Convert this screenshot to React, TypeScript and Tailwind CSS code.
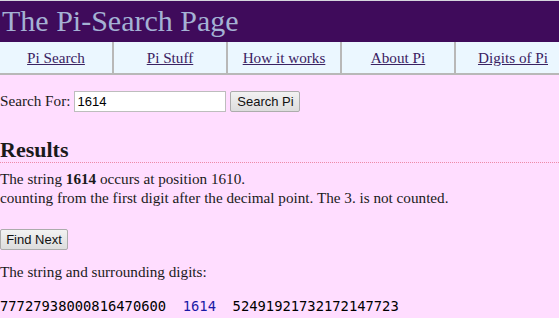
import React from "react";

const serif = { fontFamily: '"Liberation Serif", "Times New Roman", serif' };

export default function App() {
  const links = ["Pi Search", "Pi Stuff", "How it works", "About Pi", "Digits of Pi"];
  return (
    <div className="min-h-[318px] w-full overflow-hidden bg-[#ffddff] text-[#1a1a1a]" style={serif}>
      <div className="border-t border-[#d6d6de]" />
      <div className="h-[41px] bg-[#3f0b5b] pl-[2px] text-[30px] leading-[40px] text-[#a4b2d4]">
        The Pi-Search Page
      </div>
      <nav className="grid h-[33px] w-[570px] grid-cols-[114px_114px_114px_114px_114px] border-b-2 border-[#b8b8b8] bg-[#ebf7ff]">
        {links.map((l, i) => (
          <div
            key={l}
            className={
              "flex items-center justify-center text-[15.2px] leading-[31px] " +
              (i < 4 ? "border-r-2 border-[#b8b8b8]" : "")
            }
          >
            <a href="#" className="text-[#3a2262] underline">
              {l}
            </a>
          </div>
        ))}
      </nav>
      <div className="mt-[16px] flex h-[21px] items-center text-[15.2px]">
        <span>Search For:</span>
        <input
          defaultValue="1614"
          className="ml-[4px] h-[21px] w-[152px] border border-[#bdbdbd] bg-white px-[2px] text-[13px] text-black outline-none"
          style={{ fontFamily: '"Liberation Sans", Arial, sans-serif' }}
        />
        <button
          className="ml-[4px] h-[21px] w-[70px] rounded-[2px] border border-[#acacac] bg-gradient-to-b from-[#f2f2f2] to-[#dddddd] text-[13px] text-[#111]"
          style={{ fontFamily: '"Liberation Sans", Arial, sans-serif' }}
        >
          Search Pi
        </button>
      </div>
      <h2 className="mt-[25px] border-b border-dotted border-[#ee8aa8] text-[22px] font-bold leading-[25px]">
        Results
      </h2>
      <p className="mt-[6px] text-[15.2px] leading-[19px]">
        The string <b>1614</b> occurs at position 1610.
        <br />
        counting from the first digit after the decimal point. The 3. is not counted.
      </p>
      <button
        className="mt-[22px] block h-[21px] w-[68px] rounded-[2px] border border-[#acacac] bg-gradient-to-b from-[#f2f2f2] to-[#dddddd] text-[13px] text-[#111]"
        style={{ fontFamily: '"Liberation Sans", Arial, sans-serif' }}
      >
        Find Next
      </button>
      <p className="mt-[12px] text-[15.2px] leading-[19px]">The string and surrounding digits:</p>
      <pre
        className="mt-[16px] text-[13.8px] leading-[18px] text-black"
        style={{ fontFamily: '"DejaVu Sans Mono", Consolas, monospace' }}
      >
        {"77727938000816470600  "}
        <span className="text-[#1a1aa6]">1614</span>
        {"  52491921732172147723"}
      </pre>
    </div>
  );
}
